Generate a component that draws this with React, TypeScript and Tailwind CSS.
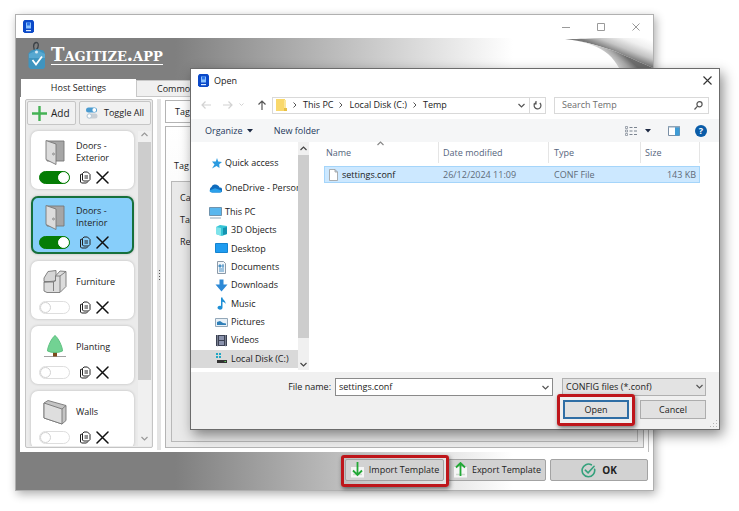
import type { ReactNode } from 'react';
import clsx from 'clsx';

interface HostItem {
  id: string;
  label: string;
  icon: 'door' | 'sofa' | 'tree' | 'wall';
  enabled: boolean;
  selected?: boolean;
}

const HOSTS: HostItem[] = [
  { id: 'ext', label: 'Doors - Exterior', icon: 'door', enabled: true },
  { id: 'int', label: 'Doors - Interior', icon: 'door', enabled: true, selected: true },
  { id: 'fur', label: 'Furniture', icon: 'sofa', enabled: false },
  { id: 'pla', label: 'Planting', icon: 'tree', enabled: false },
  { id: 'wal', label: 'Walls', icon: 'wall', enabled: false },
];

const FILES = [{ name: 'settings.conf', date: '26/12/2024 11:09', type: 'CONF File', size: '143 KB' }];

export default function App() {
  return (
    <div className="relative min-h-screen overflow-hidden bg-white pt-[14px] pr-[85px] pb-5 pl-[15px] font-['Open_Sans',sans-serif] text-[9px] leading-3 text-[#222]">
      <MainWindow />
      <OpenDialog />
    </div>
  );
}

/* ---------- main window ---------- */

function MainWindow() {
  return (
    <main className="border border-[#b0b0b0] bg-white shadow-[2px_3px_9px_rgba(0,0,0,0.32)]">
      <div className="flex h-[23px] items-center justify-between pr-[12px] pl-[7px]">
        <AppIcon />
        <div className="flex items-center gap-[25px] text-[#9a9a9a]">
          <button aria-label="Minimize"><svg width="10" height="10" viewBox="0 0 10 10" stroke="currentColor"><path d="M1 5.5h8" /></svg></button>
          <button aria-label="Maximize"><svg width="10" height="10" viewBox="0 0 10 10" fill="none" stroke="currentColor"><path d="M1.5 1.5h7v7h-7z" /></svg></button>
          <button aria-label="Close"><svg width="10" height="10" viewBox="0 0 10 10" stroke="currentColor"><path d="M1.5 1.5l7 7M8.500 1.500l-7 7" /></svg></button>
        </div>
      </div>

      <div className="bg-[linear-gradient(90deg,#7f7f7f_0,#7f7f7f_25%,#ffffff_78%)]">
        <header className="flex h-[41px] justify-between pl-[11px]">
          <div className="flex items-start gap-[4px] pt-[3px]">
            <LogoTag />
            <a href="#home" className="mt-[5px] border-b border-white font-['DejaVu_Serif',serif] text-[18px] leading-[18px] font-bold text-white [font-variant:small-caps]">
              Tagitize.app
            </a>
          </div>
          <PageCurl />
        </header>

        <nav className="flex items-end pl-[5px]">
          <button className="h-[18px] w-[115px] bg-white text-center">Host Settings</button>
          <button className="h-[17px] w-[115px] border border-[#c8c8c8] bg-[#f0f0f0] pl-[20px] text-left">Common Settings</button>
        </nav>

        <section className="mr-[4px] ml-[4px] flex gap-[4px] border-r border-[#bdbdbd] bg-white pt-[2px] pr-[4px] pb-[4px] pl-[5px]">
          <HostPanel />
          <div className="-mb-[2px] flex w-[4px] flex-col items-center justify-center bg-[#e4e4e4] text-[#555]">
            <svg width="3" height="10" viewBox="0 0 3 10" fill="currentColor"><path d="M1 0h1v1H1zM1 3h1v1H1zM1 6h1v1H1zM1 9h1v1H1z" /></svg>
          </div>
          <TagPanel />
        </section>
      </div>

      <footer className="flex h-[38px] items-start justify-end gap-[4px] bg-[linear-gradient(90deg,#7f7f7f_0,#7f7f7f_25%,#ffffff_78%)] pt-[7px] pr-[5px]">
        <div className="relative">
          <FooterButton className="w-[99px]"><ArrowSheet dir="down" />Import Template</FooterButton>
          <span className="pointer-events-none absolute -top-[4px] -right-[5px] -bottom-[6px] -left-[4px] rounded-[3px] border-[3px] border-[#be161b] shadow-[1px_2px_4px_rgba(0,0,0,0.5)]" />
        </div>
        <FooterButton className="w-[98px]"><ArrowSheet dir="up" />Export Template</FooterButton>
        <FooterButton className="w-[98px] gap-[6px] text-[10px] font-bold">
          <svg width="15" height="15" viewBox="0 0 15 15" fill="none" stroke="#35a17c" strokeWidth="1.600" strokeLinecap="round">
            <path d="M13.600 6.200A6.300 6.300 0 1 1 10.300 1.800" />
            <path d="M4.300 7.200l2.800 2.700 6-6.600" />
          </svg>
          OK
        </FooterButton>
      </footer>
    </main>
  );
}

function FooterButton({ className, children }: { className?: string; children: ReactNode }) {
  return (
    <button className={clsx('flex h-[22px] items-center justify-center gap-[4px] rounded-[2px] border border-[#a3a3a3] bg-[#d2d2d2] whitespace-nowrap', className)}>
      {children}
    </button>
  );
}

function HostPanel() {
  return (
    <div className="w-[128px] shrink-0 rounded-[2px] border border-[#c4c4c4] bg-[#ebebeb] p-px">
      <div className="flex gap-[3px]">
        <button className="flex h-[24px] w-[49px] items-center gap-[4px] rounded-[2px] border border-[#c6c6c6] bg-[#f1f1f1] pl-[4px] text-[10px]">
          <svg width="15" height="15" viewBox="0 0 15 15" stroke="#45b255" strokeWidth="2.400"><path d="M7.500 0v15M0 7.500h15" /></svg>
          Add
        </button>
        <button className="flex h-[24px] flex-1 items-center gap-[6px] rounded-[2px] border border-[#c6c6c6] bg-[#f1f1f1] pl-[6px] whitespace-nowrap">
          <svg width="12" height="12" viewBox="0 0 12 12">
            <rect x="0" y="0.500" width="11" height="5" rx="2.500" fill="#4a9bd0" />
            <circle cx="8.300" cy="3" r="1.900" fill="#fff" />
            <rect x="0.500" y="6.500" width="11" height="5" rx="2.500" fill="#c9cfd5" />
            <circle cx="3.300" cy="9" r="2.100" fill="#fff" stroke="#8fb4d0" strokeWidth="0.500" />
          </svg>
          Toggle All
        </button>
      </div>

      <div className="flex h-[321px] overflow-hidden pt-[6px]">
        <ul className="flex flex-1 flex-col gap-[7px] pr-[4px] pl-[4px]">
          {HOSTS.map(h => <HostCard key={h.id} host={h} />)}
        </ul>
        <div className="flex w-[13px] flex-col items-center bg-[#f0f0f0] text-[#999]">
          <Chevron dir="up" size={7} />
          <div className="mt-[4px] h-[238px] w-full bg-[#cdcdcd]" />
          <div className="mt-auto mb-[4px]"><Chevron dir="down" size={7} /></div>
        </div>
      </div>
    </div>
  );
}

function HostCard({ host }: { host: HostItem }) {
  return (
    <li className={clsx('h-[58px] shrink-0 rounded-[7px] border-2 px-[6px] pt-[3px] shadow-[0_0_3px_rgba(0,0,0,0.22)]',
      host.selected ? 'border-[#16703c] bg-[#87cefa]' : 'border-white bg-white')}>
      <div className="flex h-[32px] items-center gap-[9px] pl-[4px]">
        <HostIcon kind={host.icon} />
        <span className="w-[40px]">{host.label}</span>
      </div>
      <div className="flex h-[18px] items-center">
        <input type="checkbox" defaultChecked={host.enabled} aria-label={`Enable ${host.label}`}
          className="h-[13px] w-[31px] appearance-none rounded-full border border-[#dedede] bg-white before:block before:h-[11px] before:w-[11px] before:rounded-full before:border before:border-[#d2d2d2] before:bg-white before:content-[''] checked:border-[#057d05] checked:bg-[#057d05] checked:before:ml-[18px] checked:before:border-white" />
        <button aria-label="Duplicate" className="ml-[9px]">
          <svg width="12" height="13" viewBox="0 0 12 13" fill="none" stroke="#222" strokeLinejoin="round">
            <path d="M5 1h3.500L11 3.500V8.500L9.500 10H4.500L3.500 9V2.500z" />
            <path d="M3.500 3L1.500 3.500V11l1 1h5l1.500-1.500M5.500 5h3.500M5.500 7h3.500" />
          </svg>
        </button>
        <button aria-label="Delete" className="ml-[5px]">
          <svg width="13" height="13" viewBox="0 0 13 13" stroke="#111" strokeWidth="1.500" strokeLinecap="round"><path d="M1 1l11 11M12 1L1 12" /></svg>
        </button>
      </div>
    </li>
  );
}

function TagPanel() {
  return (
    <div className="flex min-w-0 flex-1 flex-col gap-[3px]">
      <div className="mt-px flex h-[23px] items-center border border-[#b4b4b4] pl-[9px]">Tag</div>
      <div className="flex flex-1 flex-col border border-[#b4b4b4] bg-linear-to-b from-white to-[#ececec] px-[5px] pb-[5px]">
        <p className="flex h-[54px] items-end pb-[9px] pl-[3px]">Tag</p>
        <div className="flex flex-1 flex-col gap-[10px] border border-[#b8b8b8] bg-[#e9e9e9] pt-[10px] pl-[8px]">
          <span>Ca</span>
          <span>Tag</span>
          <span>Re</span>
        </div>
      </div>
    </div>
  );
}

/* ---------- open dialog ---------- */

function OpenDialog() {
  return (
    <div role="dialog" aria-label="Open" className="absolute top-[68px] right-[19px] left-[190px] border border-[#6b6b6b] bg-white shadow-[3px_5px_12px_rgba(0,0,0,0.45)]">
      <div className="flex h-[23px] items-center gap-[5px] pr-[7px] pl-[7px]">
        <AppIcon />
        <h1>Open</h1>
        <button aria-label="Close" className="ml-auto">
          <svg width="9" height="9" viewBox="0 0 9 9" stroke="#333" strokeWidth="1.100"><path d="M0.500 0.500l8 8M8.500 0.500l-8 8" /></svg>
        </button>
      </div>

      <div className="flex h-[27px] items-center pr-[10px] pb-[1px] pl-[10px]">
        <div className="flex w-[71px] items-center text-[#d2d2d2]">
          <Arrow className="mr-[12px]" d="M10 5H1M4.500 1.500L1 5l3.500 3.500" />
          <Arrow className="mr-[5px]" d="M0 5h9M5.500 1.500L9 5 5.500 8.500" />
          <svg width="7" height="4" viewBox="0 0 7 4" fill="none" stroke="currentColor"><path d="M1.500 0.500l2 2 2-2" /></svg>
          <Arrow className="ml-[12px] text-[#555]" d="M5 10V1M1.500 4.500L5 1l3.500 3.500" />
        </div>
        <div className="flex h-[17px] min-w-0 flex-1 items-center border border-[#d9d9d9] pl-[3px]">
          <svg width="11" height="12" viewBox="0 0 11 12"><path d="M0 0h9v12H0z" fill="#f9d86b" /><path d="M8 1h2v8H8z" fill="#fbe69a" /><path d="M8 9h3v3H8z" fill="#e8bf45" /></svg>
          {['This PC', 'Local Disk (C:)', 'Temp'].map(part => (
            <span key={part} className="flex items-center whitespace-nowrap">
              <svg className="mr-[6px] ml-[6px]" width="4" height="6" viewBox="0 0 4 6" fill="none" stroke="#555"><path d="M0.500 0.500L3 3 0.500 5.500" /></svg>
              {part}
            </span>
          ))}
          <span className="mr-[4px] ml-auto text-[#555]"><Chevron dir="down" size={7} /></span>
          <button aria-label="Refresh" className="flex h-full w-[16px] items-center justify-center border-l border-[#d9d9d9]">
            <svg width="9" height="9" viewBox="0 0 9 9" fill="none" stroke="#555" strokeWidth="1.200"><path d="M6.800 2A3.400 3.400 0 1 1 3 1.500M3 0v3H0.500" /></svg>
          </button>
        </div>
        <label className="ml-[8px] flex h-[17px] w-[155px] items-center border border-[#d9d9d9] pr-[5px] pl-[7px]">
          <input aria-label="Search Temp" placeholder="Search Temp" className="min-w-0 flex-1 outline-none placeholder:text-[#6d6d6d]" />
          <svg width="9" height="9" viewBox="0 0 9 9" fill="none" stroke="#555" strokeWidth="1.200"><circle cx="5.500" cy="3.300" r="2.600" /><path d="M3.600 5.200L0.500 8.500" /></svg>
        </label>
      </div>

      <div className="flex h-[23px] items-center bg-[#f5f6f7] pr-[12px] pl-[14px] text-[#1e395b]">
        <button className="flex items-center gap-[4px]">Organize <Triangle /></button>
        <button className="ml-[21px]">New folder</button>
        <button aria-label="Change view" className="ml-auto flex items-center gap-[8px]">
          <svg width="12" height="10" viewBox="0 0 12 10" fill="none" stroke="#7b8490">
            <path d="M0.500 0.500h2v2h-2zM0.500 4h2v2h-2zM0.500 7.500h2v2h-2z" strokeWidth="0.700" />
            <path d="M4.500 1.500h3M9 1.500h3M4.500 5h3M9 5h3M4.500 8.500h3M9 8.500h3" />
          </svg>
          <Triangle />
        </button>
        <button aria-label="Preview pane" className="ml-[17px]">
          <svg width="12" height="10" viewBox="0 0 12 10"><path d="M0.500 0.500h11v9H0.500z" fill="#fff" stroke="#7a8fa5" /><path d="M7 1h4.500v8.500H7z" fill="#3f9cd6" /><path d="M0 0h12v1.500H0z" fill="#8fa5b8" /></svg>
        </button>
        <button aria-label="Help" className="ml-[15px] flex h-[12px] w-[12px] items-center justify-center rounded-full bg-[#0a5ca8] text-[9px] font-bold text-white">?</button>
      </div>

      <div className="flex h-[230px]">
        <Sidebar />
        <div className="min-w-0 flex-1 pr-[19px] pl-[14px]">
          <div className="relative">
            <span className="absolute -top-[2px] left-[53px] text-[#888]"><Chevron dir="up" size={7} /></span>
            <table className="w-full table-fixed border-separate border-spacing-0 text-left">
              <thead>
                <tr className="h-[21px] text-[#55657d] *:border-r *:border-[#e5e5e5] *:font-normal">
                  <th className="w-[115px] pl-[2px]">Name</th>
                  <th className="w-[110px] pl-[4px]">Date modified</th>
                  <th className="w-[92px] pl-[5px]">Type</th>
                  <th className="pl-[4px]">Size</th>
                </tr>
              </thead>
              <tbody>
                <tr className="h-[3px]"><td colSpan={4} /></tr>
                {FILES.map(f => (
                  <tr key={f.name} className="h-[17px] text-[#5f6b78] *:border-y *:border-[#a5d5fa] *:bg-[#cce8ff]">
                    <td className="border-l pl-[4px] text-[#1a1a1a]">
                      <span className="flex items-center gap-[4px]">
                        <svg width="9" height="12" viewBox="0 0 9 12" fill="#fff" stroke="#9a9a9a" strokeWidth="0.800"><path d="M0.500 0.500h5.500l2.500 2.500v8.500h-8zM6 0.500v2.500h2.500" /></svg>
                        {f.name}
                      </span>
                    </td>
                    <td className="pl-[4px]">{f.date}</td>
                    <td className="pl-[5px]">{f.type}</td>
                    <td className="border-r pr-[3px] text-right">{f.size}</td>
                  </tr>
                ))}
              </tbody>
            </table>
          </div>
        </div>
      </div>

      <form className="relative bg-[#f0f0f0] pt-[6px] pr-[13px] pb-[10px]" onSubmit={e => e.preventDefault()}>
        <div className="flex items-center">
          <label htmlFor="filename" className="w-[140px] text-right">File name:</label>
          <div className="ml-[4px] flex h-[18px] min-w-0 flex-1 items-center border border-[#8a8a8a] bg-white pr-[3px] pl-[3px] text-[#555]">
            <input id="filename" defaultValue="settings.conf" className="min-w-0 flex-1 text-[#222] outline-none" />
            <Chevron dir="down" size={7} />
          </div>
          <div className="relative ml-[9px]">
            <select aria-label="File type" className="h-[18px] w-[144px] appearance-none border border-[#b0b0b0] bg-[#e3e3e3] pl-[3px]">
              <option>CONFIG files (*.conf)</option>
            </select>
            <span className="pointer-events-none absolute top-[5px] right-[3px] text-[#555]"><Chevron dir="down" size={7} /></span>
          </div>
        </div>
        <div className="mt-[4px] flex justify-end gap-[11px]">
          <div className="relative">
            <button className="h-[19px] w-[66px] border-2 border-[#2f6ea5] bg-[#e1e1e1]">Open</button>
            <span className="pointer-events-none absolute -inset-x-[6px] -top-[6px] -bottom-[7px] rounded-[3px] border-[3px] border-[#be161b] shadow-[1px_2px_4px_rgba(0,0,0,0.5)]" />
          </div>
          <button className="h-[19px] w-[66px] border border-[#adadad] bg-[#e1e1e1]">Cancel</button>
        </div>
        <svg className="absolute right-px bottom-px" width="8" height="8" viewBox="0 0 8 8" fill="#b5b5b5"><path d="M6 0h1v1H6zM3 3h1v1H3zM6 3h1v1H6zM0 6h1v1H0zM3 6h1v1H3zM6 6h1v1H6z" /></svg>
      </form>
    </div>
  );
}

function Sidebar() {
  return (
    <aside className="flex w-[119px] shrink-0">
      <div className="w-[107px] overflow-hidden pt-[12px] whitespace-nowrap">
        <SideTop label="Quick access">
          <path d="M8 1l1.200 3.500L13 5l-2.800 2.300L10.500 11 7.500 9 3 11.500 5.500 7.500 3 4.500h3.800z" fill="#2b9be0" />
        </SideTop>
        <div className="h-[7px]" />
        <SideTop label="OneDrive - Person">
          <path d="M3 10.500a3 3 0 0 1-.5-5.500A4 4 0 0 1 9 3.500a3.500 3.500 0 0 1 1.500 2A2.500 2.500 0 0 1 11 10.500z" fill="#0f6cbd" />
          <path d="M3 10.500c-1.500 0-2.500-.8-2.500-2L6 6.300l6.500 2.200c0 1.200-.6 2-1.500 2z" fill="#2aa0ea" />
        </SideTop>
        <div className="h-[6px]" />
        <ul className="flex h-[165px] flex-col *:flex *:flex-1 *:items-center *:gap-[3px] *:pl-[24px]">
          <li className="-ml-[6px]">
            <SideIcon><path d="M0.500 1.500h12v8h-12z" fill="#59b7ee" stroke="#6f93ad" /><path d="M1 12h11" stroke="#8fa7b8" /></SideIcon>This PC
          </li>
          <li><SideIcon><path d="M1 3l4-2 7 1v8l-5 2-6-2z" fill="#37c5d6" /><path d="M1 3l5 1v8l-5-2z" fill="#7fe3ea" /><path d="M8 4l4-1v7l-4 1z" fill="#1593b0" /></SideIcon>3D Objects</li>
          <li><SideIcon><path d="M0.500 1.500h12v9h-12z" fill="#1f9cf0" stroke="#1583cf" /></SideIcon>Desktop</li>
          <li><SideIcon><path d="M2.500 0.500h6l2 2v10h-8z" fill="#f2f6fa" stroke="#8c9aa8" /><path d="M4 4h2v2H4zM7 5h2M4 8h5M4 10h5M8 3v4" stroke="#4a90c4" fill="#4a90c4" /></SideIcon>Documents</li>
          <li><SideIcon><path d="M4.500 0.500h4v5h4l-6 7-6-7h4z" fill="#2d89d6" /></SideIcon>Downloads</li>
          <li><SideIcon><path d="M6 0.500h1.500c0 2.500 3.500 3 3 6.500-.6-1.500-1.500-2-3-2.300V10.500c0 3-5 2.600-5 .3C2.500 9 4.500 8.300 6 9z" fill="#1e8fd5" /></SideIcon>Music</li>
          <li><SideIcon><path d="M0.500 2.500h12v8h-12z" fill="#e8f1f8" stroke="#93a7b8" /><path d="M2 9V6l3-1 3 2 3 .5V9z" fill="#2f7fb8" /></SideIcon>Pictures</li>
          <li><SideIcon><path d="M1 1h11v11H1z" fill="#3c4254" /><path d="M4 2h5v4H4zM4 7h5v4H4z" fill="#8b93ad" /><path d="M2.500 1.500v11M10.500 1.500v11" stroke="#b9bfcc" strokeDasharray="1 1" /></SideIcon>Videos</li>
          <li className="bg-[#d9d9d9]"><SideIcon><path d="M1 1h2v2H1zM4 1h2v2H4zM1 4h2v2H1zM4 4h2v2H4z" fill="#22a7c4" /><path d="M2 8h10v3H2z" fill="#333" /><path d="M9.500 9.500h1.500" stroke="#5ad35a" /></SideIcon>Local Disk (C:)</li>
        </ul>
      </div>
      <div className="mb-[2px] flex w-[11px] flex-col items-center bg-[#f0f0f0] pt-[3px] text-[#444]">
        <Chevron dir="up" size={7} />
        <div className="mt-[3px] h-[183px] w-full bg-[#cdcdcd]" />
        <div className="mt-auto mb-[2px]"><Chevron dir="down" size={7} /></div>
      </div>
    </aside>
  );
}

function SideTop({ label, children }: { label: string; children: ReactNode }) {
  return <div className="flex h-[18px] items-center gap-[3px] pl-[18px]"><SideIcon>{children}</SideIcon>{label}</div>;
}

/* ---------- icons ---------- */

function SideIcon({ children }: { children: ReactNode }) {
  return <svg className="shrink-0" width="13" height="13" viewBox="0 0 13 13" fill="none">{children}</svg>;
}

function Arrow({ d, className }: { d: string; className?: string }) {
  return <svg className={clsx('shrink-0', className)} width="10" height="10" viewBox="0 0 10 10" fill="none" stroke="currentColor" strokeWidth="1.200"><path d={d} /></svg>;
}

function ArrowSheet({ dir }: { dir: 'up' | 'down' }) {
  return (
    <svg className="shrink-0" width="15" height="16" viewBox="0 0 15 16" fill="none">
      <path d="M1 5h13v10.500H1z" fill="#f6f6f6" />
      <path d="M3 12.500h9" stroke="#cfd8cf" strokeWidth="1.500" />
      <path d={dir === 'down' ? 'M7.500 0v12.500M3 8.500l4.500 4.500L12 8.500' : 'M7.500 14V1M3 5.500L7.500 1 12 5.500'} stroke="#22a836" strokeWidth="1.800" />
    </svg>
  );
}

function Triangle() {
  return <svg width="6" height="4" viewBox="0 0 6 4" fill="#1e2a44"><path d="M0 0h6L3 3.500z" /></svg>;
}

function Chevron({ dir, size }: { dir: 'up' | 'down'; size: number }) {
  return (
    <svg className="shrink-0" width={size} height={size} viewBox="0 0 7 7" fill="none" stroke="currentColor" strokeWidth="1.200">
      <path d={dir === 'up' ? 'M0.500 5l3-3 3 3' : 'M0.500 2l3 3 3-3'} />
    </svg>
  );
}

function AppIcon() {
  return (
    <svg width="11" height="13" viewBox="0 0 11 13">
      <path d="M1.500 0h8l1.500 1.500v10L9.500 13h-8L0 11.500v-10z" fill="#0b49c8" />
      <path d="M3 2.500h5v6H3z" fill="#8cc4ff" />
      <path d="M4 2.500h3v3H4z" fill="#2c74ea" />
      <path d="M3 10h5v1.200H3z" fill="#dcebff" />
    </svg>
  );
}

function LogoTag() {
  return (
    <svg width="20" height="29" viewBox="0 0 20 29" fill="none">
      <path d="M9.500 13C5.500 8 6 2 9 1.500c3-.3 3 4.500.500 7" stroke="#3d4348" strokeWidth="1.300" />
      <path d="M4 9.500L10 8l6.500 1.500 1.500 3v13.500l-1.500 2h-13l-2-2V12.500z" fill="#3f94bf" />
      <path d="M2 13l8-4 8 4v4H2z" fill="#62b1d8" opacity="0.700" />
      <circle cx="9.500" cy="11" r="1.500" fill="#d8e9f2" />
      <path d="M5.500 19l3.500 4.500 6-8" stroke="#fff" strokeWidth="1.800" />
    </svg>
  );
}

function PageCurl() {
  return (
    <svg width="98" height="41" viewBox="0 0 98 41">
      <defs>
        <linearGradient id="curlTop" x1="74" y1="20" x2="83" y2="-3" gradientUnits="userSpaceOnUse">
          <stop offset="0" stopColor="#7a7a7a" />
          <stop offset="0.300" stopColor="#c4c4c4" />
          <stop offset="0.650" stopColor="#efefef" />
          <stop offset="1" stopColor="#fff" />
        </linearGradient>
        <linearGradient id="curlUnder" x1="58" y1="27" x2="68" y2="16" gradientUnits="userSpaceOnUse">
          <stop offset="0" stopColor="#e2e2e2" />
          <stop offset="0.600" stopColor="#a8a8a8" />
          <stop offset="1" stopColor="#6e6e6e" />
        </linearGradient>
      </defs>
      <path d="M10 1C30 1 65 0 98 -6V30C85 24 75 20 62 14C48 9 30 3 10 1z" fill="url(#curlTop)" />
      <path d="M10 1C30 3 45 9 53 16C58 20 61 25 64 30H98C85 24 75 20 62 14C48 9 30 3 10 1z" fill="url(#curlUnder)" />
    </svg>
  );
}

function HostIcon({ kind }: { kind: HostItem['icon'] }) {
  return (
    <svg className="shrink-0" width="24" height="26" viewBox="0 0 24 26" stroke="#777" strokeWidth="0.900" strokeLinejoin="round">
      {kind === 'door' && (
        <>
          <path d="M4 2h17v20H4z" fill="#a6a6a6" />
          <path d="M3 1.500l10 3.500v20.500l-10-5z" fill="#dcdcdc" />
          <circle cx="10.500" cy="15" r="0.900" fill="#fff" />
        </>
      )}
      {kind === 'sofa' && (
        <>
          <path d="M1 9l4-6.500 8-1v11H1z" fill="#d6d6d6" />
          <path d="M12.500 7l4.500-5 6 .5v15l-6 6H4l-3-1.500V13l11.500-1z" fill="#dcdcdc" />
          <path d="M1 13h9.500v9M10.500 13l2-2M12.500 7h4.500v16M17 7l6-4.500" fill="none" />
        </>
      )}
      {kind === 'tree' && (
        <>
          <path d="M1 22.500h22" stroke="#999" />
          <path d="M10 17h4v5.500h-4z" fill="#7b4a1c" stroke="none" />
          <path d="M12 1.500c3 2 7.500 11 7.500 15.500-4 2-11 2-15 0C4.500 12.500 9 3.500 12 1.500z" fill="#72d293" stroke="#58bd7c" />
        </>
      )}
      {kind === 'wall' && (
        <>
          <path d="M1 4l4-2.500 18 5v15l-4 3.500-18-6z" fill="#c4c4c4" />
          <path d="M1 4l18 6v15l-18-6z" fill="#dedede" />
          <path d="M19 10l4-3.500" fill="none" />
        </>
      )}
    </svg>
  );
}
